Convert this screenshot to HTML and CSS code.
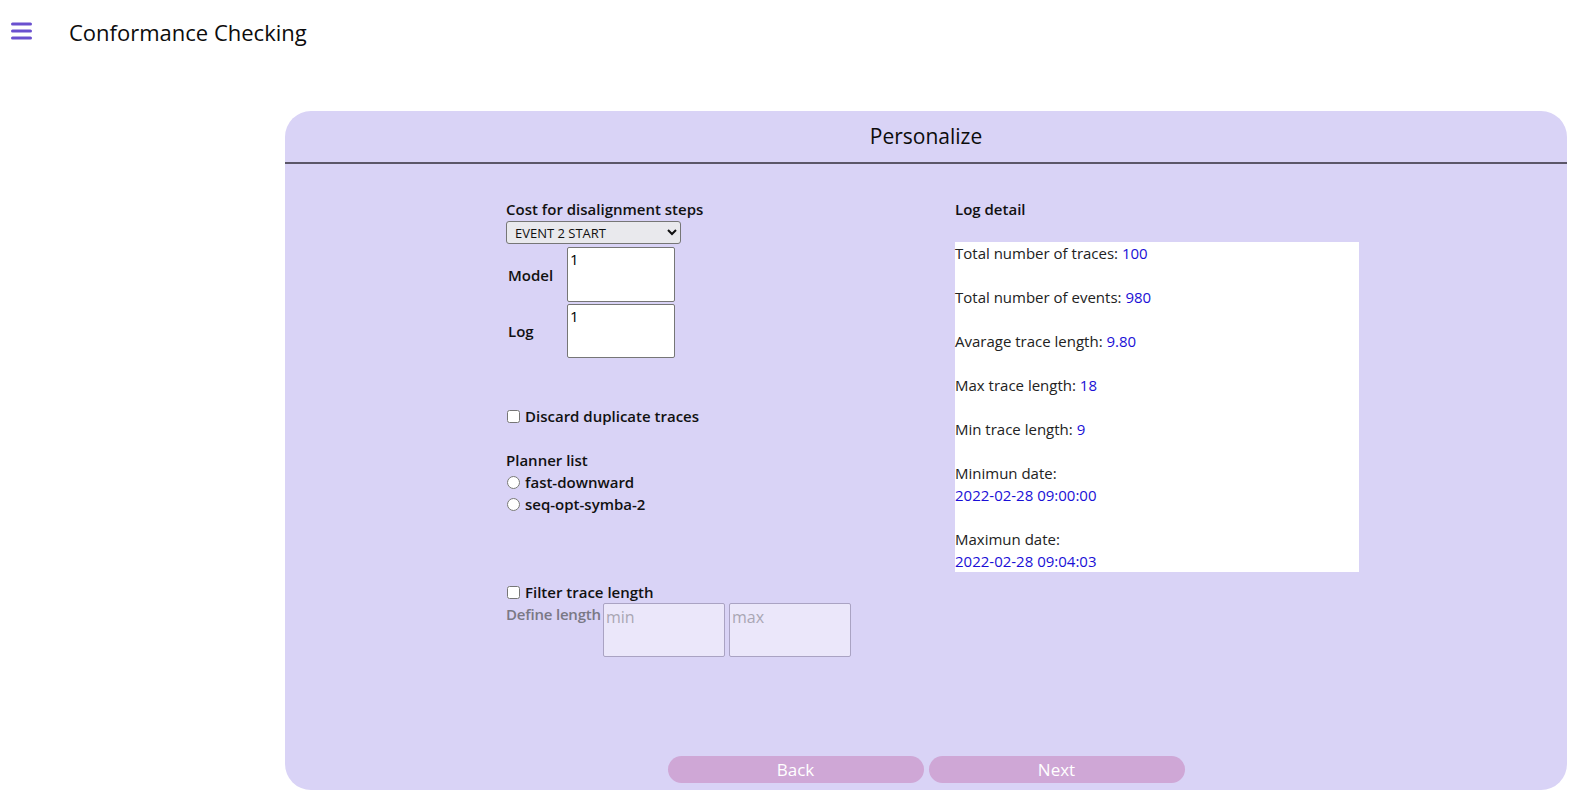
FILE: index.html
```html
<!DOCTYPE html>
<html lang="en">
<head>
<meta charset="utf-8">
<title>Conformance Checking</title>
<link rel="stylesheet" href="styles.css">
</head>
<body>
<header class="topbar">
  <button class="menu-btn" aria-label="Menu">
    <svg width="21" height="18" viewBox="0 0 21 18"><rect x="0" y="0.5" width="21" height="3" rx="1.5" fill="#6a50cf"/><rect x="0" y="7.5" width="21" height="3" rx="1.5" fill="#6a50cf"/><rect x="0" y="14.5" width="21" height="3" rx="1.5" fill="#6a50cf"/></svg>
  </button>
  <h1 class="app-title">Conformance Checking</h1>
</header>
<main class="main">
  <section class="panel">
    <div class="panel-head"><h2 class="panel-title">Personalize</h2></div>
    <div class="panel-body">
      <div class="col-left">
        <label class="field-label">Cost for disalignment steps</label>
        <select class="select">
          <option>EVENT 2 START</option>
        </select>
        <div class="cost-grid">
          <span class="cost-label">Model</span>
          <textarea class="cost-input">1</textarea>
          <span class="cost-label">Log</span>
          <textarea class="cost-input">1</textarea>
        </div>
        <label class="check-row discard"><input type="checkbox" class="check"> Discard duplicate traces</label>
        <div class="planner">
          <div class="field-label">Planner list</div>
          <label class="check-row"><input type="radio" name="planner" class="radio"> fast-downward</label>
          <label class="check-row"><input type="radio" name="planner" class="radio"> seq-opt-symba-2</label>
        </div>
        <label class="check-row filter"><input type="checkbox" class="check"> Filter trace length</label>
        <div class="length-row">
          <span class="length-label">Define length</span>
          <textarea class="length-input" placeholder="min" disabled></textarea>
          <textarea class="length-input" placeholder="max" disabled></textarea>
        </div>
      </div>
      <div class="col-right">
        <div class="field-label">Log detail</div>
        <div class="detail-box">
          <p>Total number of traces: <span class="val">100</span></p>
          <p>Total number of events: <span class="val">980</span></p>
          <p>Avarage trace length: <span class="val">9.80</span></p>
          <p>Max trace length: <span class="val">18</span></p>
          <p>Min trace length: <span class="val">9</span></p>
          <p>Minimun date:<br><span class="val">2022-02-28 09:00:00</span></p>
          <p>Maximun date:<br><span class="val">2022-02-28 09:04:03</span></p>
        </div>
      </div>
    </div>
    <div class="panel-foot">
      <button class="nav-btn">Back</button>
      <button class="nav-btn">Next</button>
    </div>
  </section>
</main>
</body>
</html>
```
FILE: styles.css
```css
* { box-sizing: border-box; }
body {
  margin: 0;
  font-family: "Open Sans", "Liberation Sans", sans-serif;
  color: #111;
  background: #fff;
}
.topbar {
  display: flex;
  align-items: center;
  height: 64px;
  padding-left: 11px;
}
.menu-btn {
  border: 0;
  background: none;
  padding: 0;
  width: 21px;
  height: 18px;
  display: flex;
  margin-top: -2px;
}
.app-title {
  margin: 0 0 0 37px;
  font-size: 22px;
  font-weight: 500;
  color: #0c0c0c;
}
.main {
  padding: 47px 19px 0 285px;
}
.panel {
  background: #d9d3f6;
  border-radius: 26px;
  height: 679px;
  display: flex;
  flex-direction: column;
}
.panel-head {
  height: 53px;
  border-bottom: 2px solid #5b5668;
  display: flex;
  justify-content: center;
  align-items: center;
  padding-bottom: 2px;
}
.panel-title {
  margin: 0;
  font-size: 21px;
  font-weight: 500;
  color: #0c0c0c;
}
.panel-body {
  flex: 1;
  display: grid;
  grid-template-columns: 449px 404px;
  padding: 34px 0 0 221px;
  font-size: 15px;
}
.col-left { display: flex; flex-direction: column; align-items: flex-start; }
.field-label {
  font-weight: 600;
  line-height: 22px;
  color: #111;
}
.select {
  margin-top: 1px;
  width: 175px;
  height: 23px;
  font-family: inherit;
  font-size: 13px;
  padding: 0 4px;
  border: 1px solid #767676;
  border-radius: 3px;
  background: #e9e9ed;
  color: #111;
}
.cost-grid {
  display: grid;
  grid-template-columns: 61px 108px;
  row-gap: 2px;
  align-items: center;
  margin-top: 3px;
}
.cost-label { font-weight: 600; padding-left: 2px; }
.cost-input {
  width: 108px;
  height: 55px;
  resize: none;
  border: 1px solid #767676;
  border-radius: 2px;
  background: #fff;
  font-family: inherit;
  font-size: 15px;
  padding: 0 2px;
  line-height: 22px;
}
.cost-grid .cost-input:last-child { height: 54px; }
.check-row {
  display: flex;
  align-items: center;
  gap: 5px;
  font-weight: 600;
  line-height: 22px;
}
.check, .radio { margin: 0 0 0 1px; width: 13px; height: 13px; }
.discard { margin-top: 47px; }
.planner { margin-top: 22px; }
.filter { margin-top: 66px; }
.length-row {
  display: flex;
  align-items: flex-start;
  gap: 4px;
}
.length-label {
  color: #7a7885;
  font-weight: 600;
  line-height: 22px;
  width: 93px;
  white-space: nowrap;
  letter-spacing: -0.2px;
}
.length-input {
  width: 122px;
  height: 54px;
  resize: none;
  border: 1px solid #aaa3c3;
  border-radius: 2px;
  background: #ebe7fa;
  font-family: inherit;
  font-size: 16px;
  padding: 2px 2px;
}
.length-input::placeholder { color: #a9a6b3; }
.detail-box {
  margin-top: 22px;
  width: 404px;
  height: 330px;
  background: #fff;
  line-height: 22px;
  color: #222;
}
.detail-box p { margin: 0 0 22px; }
.val { color: #1a0fd6; }
.panel-foot {
  display: flex;
  justify-content: center;
  gap: 5px;
  padding: 0 0 7px 0;
}
.nav-btn {
  width: 256px;
  height: 27px;
  border: 0;
  border-radius: 14px;
  background: #cfa7d6;
  color: #fff;
  font-family: inherit;
  font-size: 17px;
  font-weight: 500;
  padding: 0;
}
```
